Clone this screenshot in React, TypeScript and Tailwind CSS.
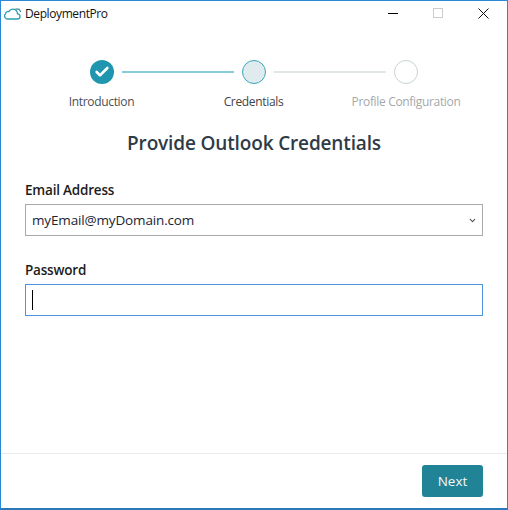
import React from 'react';
import { Check, ChevronDown } from 'lucide-react';

const CloudLogo = () => (
  <svg width="17" height="12" viewBox="0 0 17 12" fill="none" className="shrink-0">
    <path
      d="M3.5 11H13C14.8 11 16 10 16 8.4C16 7 15 6 13.6 5.8C13.2 3.2 11.2 1.2 8.8 1.2C7 1.2 5.6 2.2 4.8 3.6C4.3 3.4 3.8 3.4 3.3 3.6C2.2 4 1.5 5 1.5 6C0.8 6.5 0.5 7.3 0.6 8.2C0.8 9.9 2 11 3.5 11Z"
      stroke="#2a9fb4"
      strokeWidth="1.3"
    />
    <path d="M11.5 1L15.5 1.2M15.5 1.2L16.5 4" stroke="#17697c" strokeWidth="1" />
  </svg>
);

const TitleBar = () => (
  <div className="flex h-[26px] items-center pl-[3px]">
    <CloudLogo />
    <span className="ml-[4px] text-[12px] leading-none tracking-[-0.4px] text-[#111111]">DeploymentPro</span>
    <div className="mb-[2px] ml-auto flex items-center">
      <div className="h-px w-[10px] bg-black" />
      <div className="ml-[35px] h-[10px] w-[10px] border border-[#cccccc]" />
      <svg width="11" height="11" viewBox="0 0 11 11" className="ml-[35px] mr-[18px]">
        <path d="M0.5 0.5L10.5 10.5M10.5 0.5L0.5 10.5" stroke="#111111" strokeWidth="1" />
      </svg>
    </div>
  </div>
);

const Stepper = () => (
  <div className="mt-[33px] px-[25px]">
    <div className="flex items-center px-[64px]">
      <div className="flex h-[24px] w-[24px] shrink-0 items-center justify-center rounded-full bg-[#1f96ad]">
        <Check size={16} strokeWidth={4} className="text-white" />
      </div>
      <div className="mx-[8px] h-[2px] flex-1 bg-[#86ccd9]" />
      <div className="h-[24px] w-[24px] shrink-0 rounded-full border border-[#3aa7bb] bg-[#dfebef]" />
      <div className="mx-[8px] h-[2px] flex-1 bg-[#e0e5e7]" />
      <div className="h-[24px] w-[24px] shrink-0 rounded-full border border-[#c8d3d6] bg-white" />
    </div>
    <div className="mt-[9px] grid grid-cols-[151px_153px_152px] text-center text-[12px] leading-[18px] tracking-[-0.33px]">
      <span className="text-[#4a4f55]">Introduction</span>
      <span className="text-[#3f444a]">Credentials</span>
      <span className="whitespace-nowrap text-[#a4a8ac]">Profile Configuration</span>
    </div>
  </div>
);

const App: React.FC = () => {
  return (
    <div
      className="flex h-[510px] w-[508px] flex-col overflow-hidden border-x border-t border-b-2 border-x-[#2b88d8] border-t-[#2b88d8] border-b-[#2a78b8] bg-white"
      style={{ fontFamily: '"Open Sans", "Noto Sans", sans-serif' }}
    >
      <TitleBar />
      <Stepper />

      <h1 className="mt-[18px] text-center text-[19px] font-semibold leading-[28px] tracking-[-0.15px] text-[#2f3b47]">
        Provide Outlook Credentials
      </h1>

      {/* Form */}
      <div className="mt-[23px] px-[24px]">
        <label className="block text-[13.5px] font-semibold leading-[20px] tracking-[-0.2px] text-[#1c1c1c]">Email Address</label>
        <div className="mt-[4px] flex h-[32px] items-center justify-between border border-[#a9a9a9] pl-[6px] pr-[5px]">
          <span className="text-[13.5px] tracking-[-0.15px] text-[#1a2433]">myEmail@myDomain.com</span>
          <ChevronDown size={9} strokeWidth={3} className="text-[#555555]" />
        </div>

        <label className="mt-[24px] block text-[13.5px] font-semibold leading-[20px] tracking-[-0.2px] text-[#1c1c1c]">Password</label>
        <div className="mt-[4px] flex h-[32px] items-center border border-[#4f95de] pl-[6px]">
          <div className="h-[20px] w-px bg-black" />
        </div>
      </div>

      {/* Footer */}
      <div className="mt-auto flex h-[55px] justify-end border-t border-[#e6eaea] pr-[24px] pt-[11px]">
        <button className="h-[32px] w-[61px] rounded-[3px] bg-[#218396] text-[13.5px] text-[#f4f8f9]">Next</button>
      </div>
    </div>
  );
};

export default App;
